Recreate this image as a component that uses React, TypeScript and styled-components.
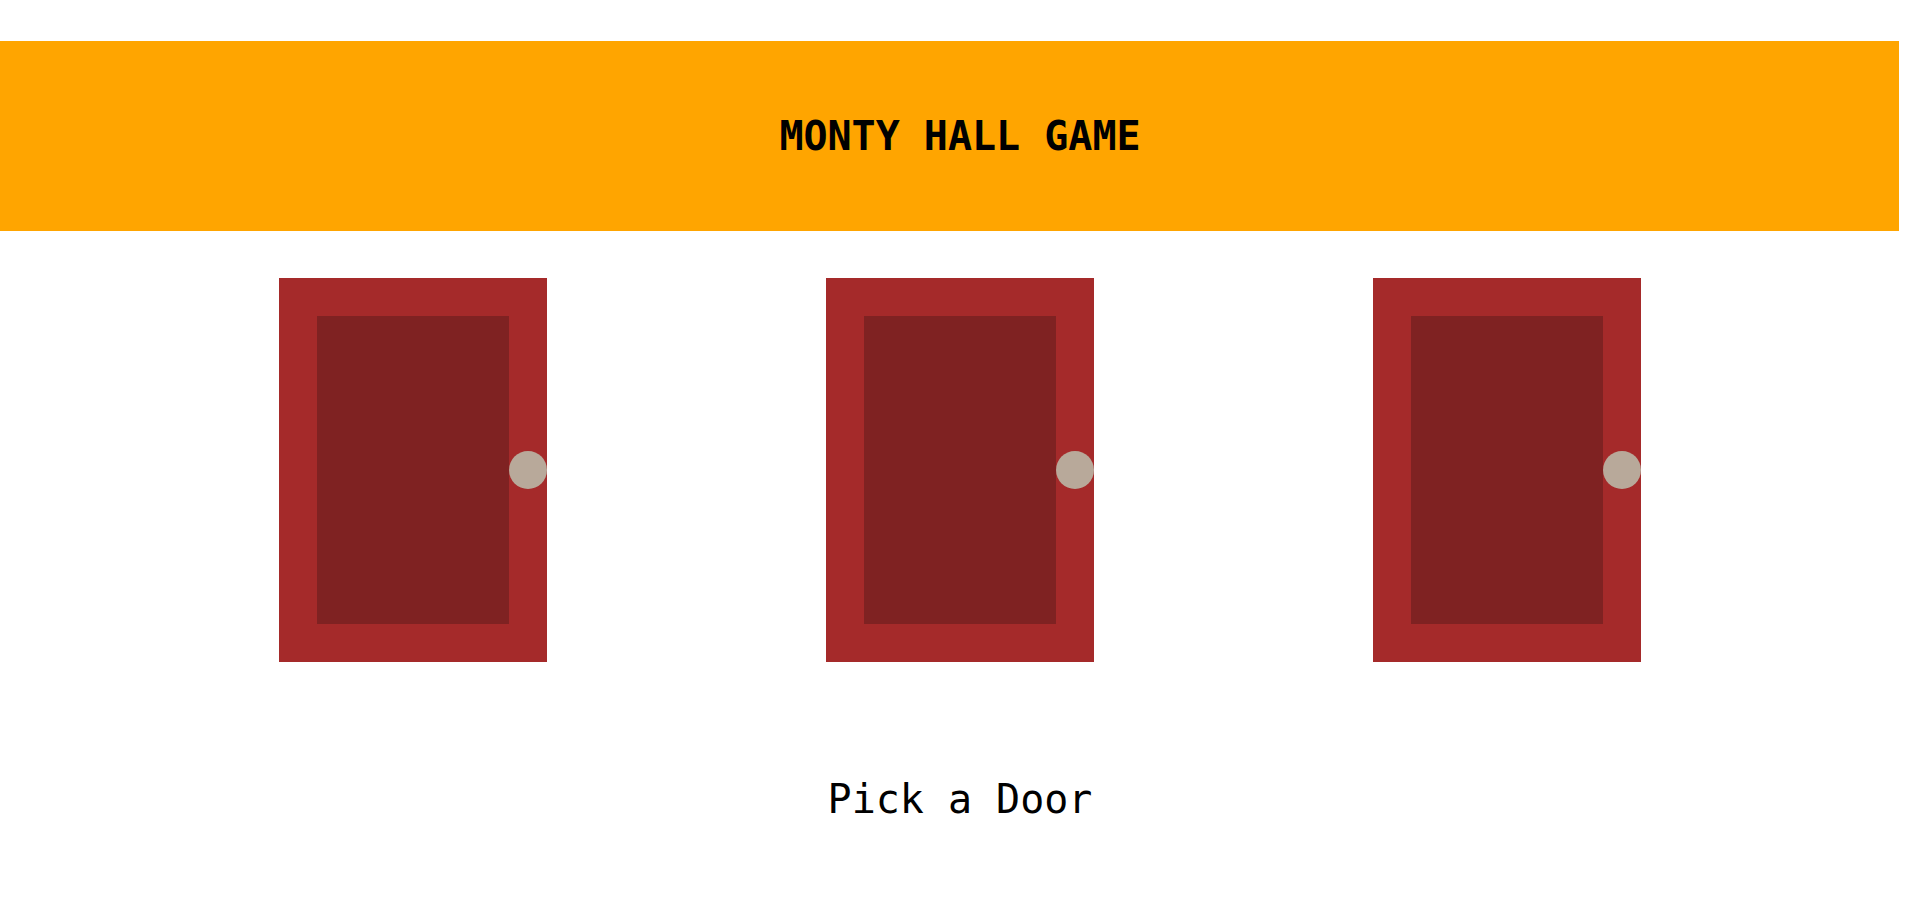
import React from "react";
import styled, { createGlobalStyle } from "styled-components";

const colors = {
  orange: "#ffa500",
  frame: "#a52a2a",
  panel: "#7f2222",
  knob: "#b8a99a",
  text: "#000000",
};

// ------------ ESTILOS ------------
const GlobalStyle = createGlobalStyle`
  html, body {
    margin: 0;
    padding: 0;
    background: #ffffff;
  }

  body {
    font-family: "DejaVu Sans Mono", "Liberation Mono", monospace;
    color: ${colors.text};
  }
`;

const Page = styled.div`
  display: flex;
  flex-direction: column;
  padding-top: 41px;
`;

const Header = styled.header`
  width: calc(100% - 21px);
  height: 190px;
  box-sizing: border-box;
  padding-left: 21px;
  background: ${colors.orange};
  display: flex;
  align-items: center;
  justify-content: center;
`;

const Title = styled.h1`
  margin: 0;
  font-size: 40px;
  font-weight: bold;
  line-height: 46px;
  letter-spacing: 0;
`;

const DoorRow = styled.div`
  display: flex;
  justify-content: space-evenly;
  margin-top: 47px;
`;

const Door = styled.button`
  position: relative;
  width: 268px;
  height: 384px;
  padding: 38px;
  box-sizing: border-box;
  border: none;
  background: ${colors.frame};
  cursor: pointer;
`;

const Panel = styled.div`
  width: 100%;
  height: 100%;
  background: ${colors.panel};
`;

const Knob = styled.span`
  position: absolute;
  right: 0;
  top: 50%;
  width: 38px;
  height: 38px;
  margin-top: -19px;
  border-radius: 50%;
  background: ${colors.knob};
`;

const Caption = styled.p`
  margin: 114px 0 0;
  text-align: center;
  font-size: 40px;
  line-height: 46px;
`;

// ------------ COMPONENTE ------------
const App: React.FC = () => {
  const doors = [1, 2, 3];

  return (
    <>
      <GlobalStyle />
      <Page>
        <Header>
          <Title>MONTY HALL GAME</Title>
        </Header>
        <DoorRow>
          {doors.map((n) => (
            <Door key={n} aria-label={`Door ${n}`}>
              <Panel />
              <Knob />
            </Door>
          ))}
        </DoorRow>
        <Caption>Pick a Door</Caption>
      </Page>
    </>
  );
};

export default App;
